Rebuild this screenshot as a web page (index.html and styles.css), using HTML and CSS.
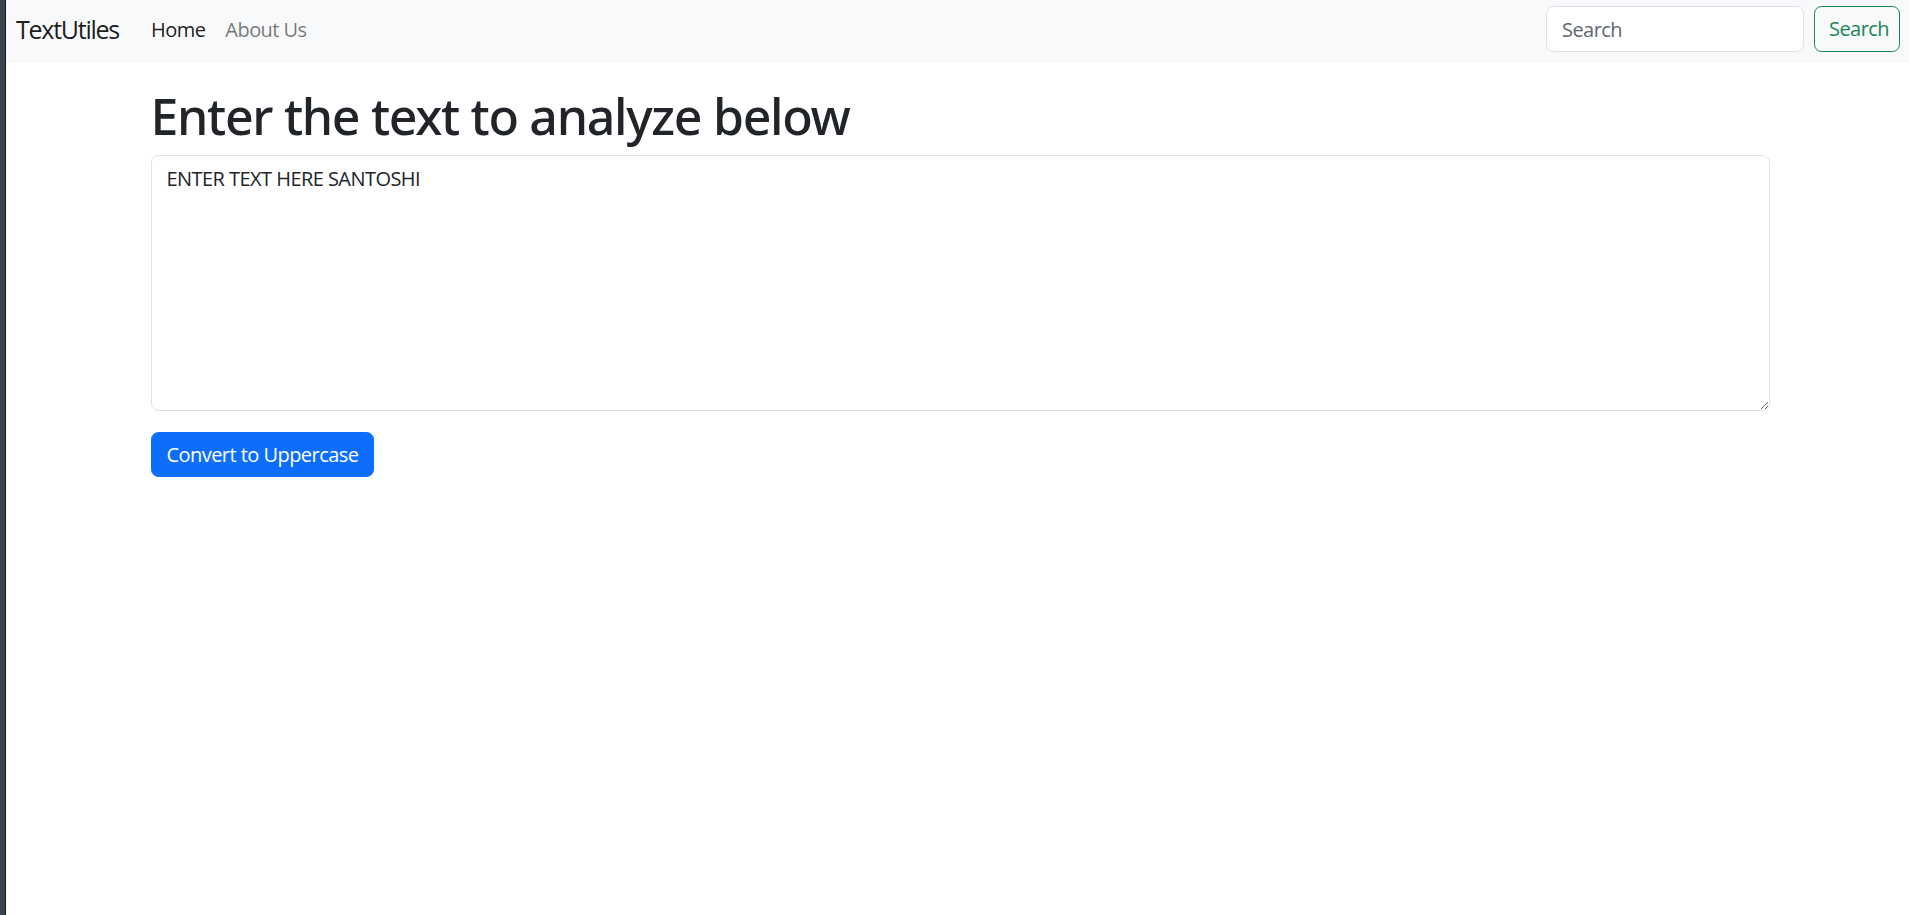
FILE: index.html
```html
<!DOCTYPE html>
<html lang="en">
<head>
<meta charset="utf-8">
<title>TextUtiles</title>
<link rel="stylesheet" href="styles.css">
</head>
<body>
<div class="frame-edge"></div>
<div class="page">
  <nav class="navbar">
    <a class="brand" href="#">TextUtiles</a>
    <ul class="nav-links">
      <li><a class="nav-link active" href="#">Home</a></li>
      <li><a class="nav-link" href="#">About Us</a></li>
    </ul>
    <form class="search-form">
      <input class="search-input" type="search" placeholder="Search">
      <button class="search-btn" type="button">Search</button>
    </form>
  </nav>
  <main class="main-wrap">
    <div class="container">
      <h1 class="title">Enter the text to analyze below</h1>
      <textarea class="text-box" rows="8">ENTER TEXT HERE SANTOSHI</textarea>
      <button class="primary-btn" type="button">Convert to Uppercase</button>
    </div>
  </main>
</div>
</body>
</html>
```
FILE: styles.css
```css
* { box-sizing: border-box; }

html, body { height: 100%; }

body {
  margin: 0;
  display: flex;
  font-family: "Open Sans", "Noto Sans", sans-serif;
  font-size: 20px;
  line-height: 1.5;
  color: #212529;
  background: #ffffff;
  letter-spacing: -0.0275em;
}

.frame-edge {
  flex: 0 0 6px;
  background: #3a4450;
  border-right: 1px solid #15191d;
}

.page {
  flex: 1;
  min-width: 0;
}

.navbar {
  display: flex;
  align-items: center;
  height: 63px;
  padding: 6px 9px 11px 10px;
  background: #f8f9fa;
}

.brand {
  font-size: 25px;
  line-height: 1.5;
  letter-spacing: -0.05em;
  color: rgba(0, 0, 0, 0.9);
  text-decoration: none;
  margin-right: 22px;
  margin-top: 2px;
}

.nav-links {
  display: flex;
  list-style: none;
  margin: 0;
  padding: 2px 0 0;
}

.nav-link {
  display: block;
  padding: 0 10px;
  color: rgba(0, 0, 0, 0.55);
  text-decoration: none;
}

.nav-link.active {
  color: rgba(0, 0, 0, 0.9);
}

.search-form {
  display: flex;
  margin-left: auto;
  gap: 10px;
}

.search-input {
  width: 258px;
  height: 46px;
  padding: 6.5px 15px;
  font: inherit;
  letter-spacing: inherit;
  color: #212529;
  background: #fff;
  border: 1px solid #dee2e6;
  border-radius: 7.5px;
  outline: none;
}

.search-input::placeholder {
  color: #5f6770;
}

.search-btn {
  width: 86px;
  height: 46px;
  padding: 6.5px 8px 6.5px 12px;
  font: inherit;
  letter-spacing: inherit;
  color: #198754;
  background: transparent;
  border: 1px solid #198754;
  border-radius: 7.5px;
}

.main-wrap {
  padding-left: 5px;
}

.container {
  width: 1619px;
  margin: 0 auto;
  padding-top: 23px;
}

.title {
  margin: 0 0 9px;
  font-family: "Noto Sans", "Open Sans", sans-serif;
  font-size: 50px;
  font-weight: 500;
  line-height: 1.2;
  letter-spacing: -0.026em;
  color: #212529;
}

.text-box {
  display: block;
  width: 100%;
  height: 256px;
  padding: 7.5px 15px;
  font: inherit;
  letter-spacing: inherit;
  color: #212529;
  background: #fff;
  border: 1px solid #dee2e6;
  border-radius: 7.5px;
  outline: none;
  resize: vertical;
  margin-bottom: 21px;
}

.primary-btn {
  display: inline-block;
  height: 45px;
  padding: 6.5px 15px;
  font: inherit;
  letter-spacing: inherit;
  line-height: 30px;
  color: #fff;
  background: #0d6efd;
  border: 1px solid #0d6efd;
  border-radius: 7.5px;
}
```
